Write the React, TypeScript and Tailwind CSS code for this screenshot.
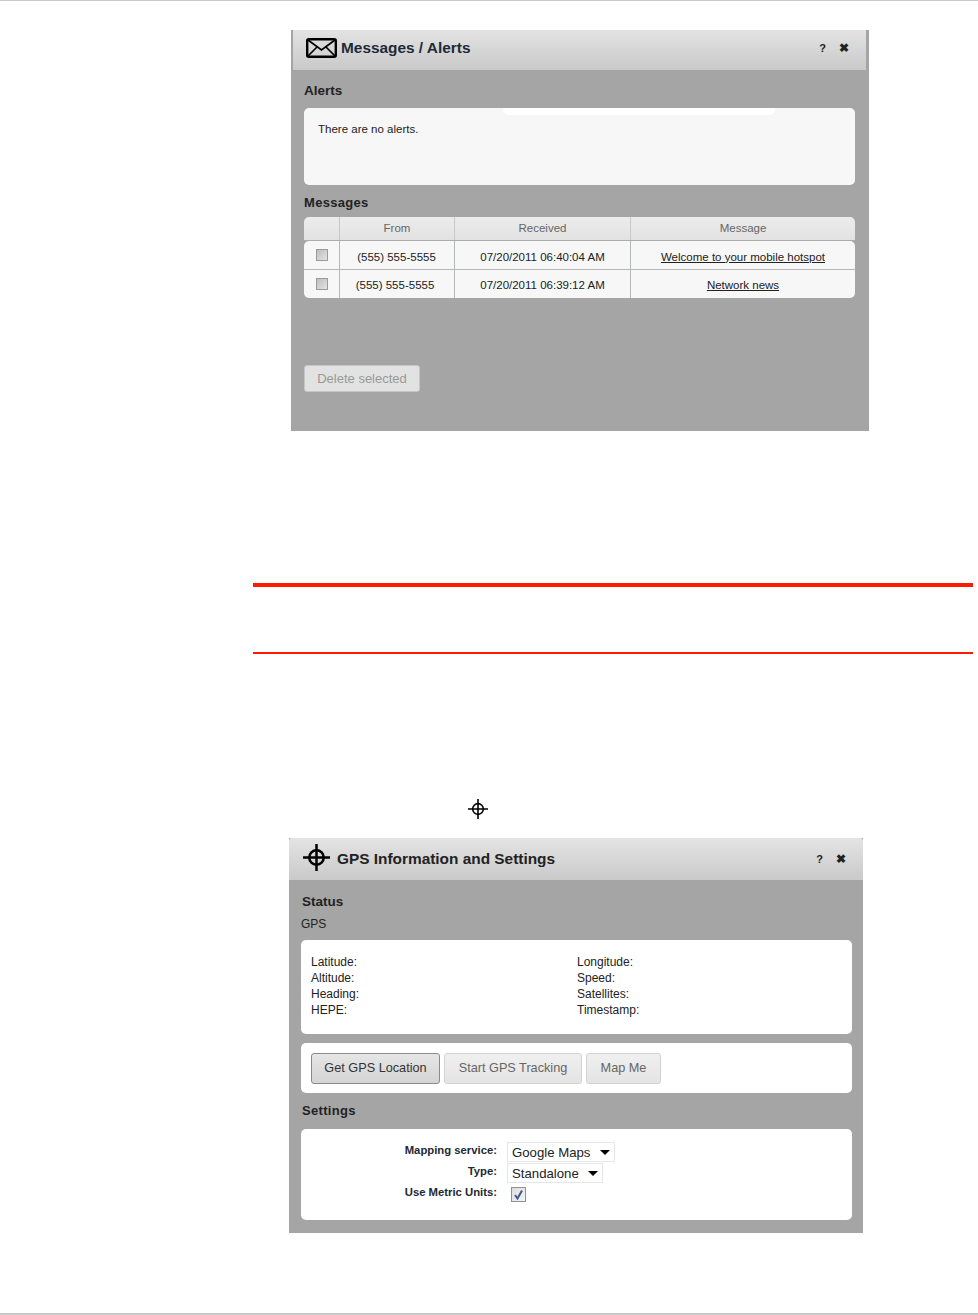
const messages = [
  { from: "(555) 555-5555", received: "07/20/2011 06:40:04 AM", subject: "Welcome to your mobile hotspot", shift: "pr-[1px] pt-[5px]", top: "pt-[5px]", height: "h-[29px]" },
  { from: "(555) 555-5555", received: "07/20/2011 06:39:12 AM", subject: "Network news", shift: "pr-[4px] pt-[3px]", top: "pt-[3px]", height: "h-[28px]" },
];

function EnvelopeIcon() {
  return (
    <svg width="31" height="20" viewBox="0 0 31 20" fill="none" stroke="#000">
      <rect x="1.2" y="1.2" width="28.6" height="17.6" rx="1.5" strokeWidth="2.4" />
      <path d="M2 2 L15.5 12 L29 2 M2 18 L11 9 M29 18 L20 9" strokeWidth="1.7" />
    </svg>
  );
}

function Crosshair({ size, strokeWidth }: { size: number; strokeWidth: number }) {
  return (
    <svg width={size} height={size} viewBox="0 0 28 28" fill="none" stroke="#000" strokeWidth={strokeWidth}>
      <circle cx="14" cy="14" r="7.5" />
      <path d="M14 0 V28 M0 14 H28" />
    </svg>
  );
}

function HeaderActions() {
  return (
    <div className="ml-auto flex items-center gap-[13px] text-[11px] font-bold text-[#222]">
      <span>?</span>
      <span className="text-[12px]">✖</span>
    </div>
  );
}

function Row({ label, className }: { label: string; className?: string }) {
  return <div className={"text-[12px] leading-[16px] text-[#222] " + (className ?? "")}>{label}</div>;
}

function FakeSelect({ label, width }: { label: string; width: string }) {
  return (
    <div className={"flex items-center h-[20px] pl-[4px] pt-[1px] bg-white border border-[#e6e6e6] text-[13.2px] text-[#222] " + width}>
      {label}
      <span className="ml-auto mr-[4px] w-0 h-0 border-x-[5px] border-x-transparent border-t-[5px] border-t-black" />
    </div>
  );
}

function GpsButton({ label, active, width }: { label: string; active?: boolean; width: string }) {
  return (
    <div
      className={
        "h-[31px] pt-[2px] flex items-center justify-center rounded-[3px] border text-[12.7px] bg-gradient-to-b " +
        width +
        (active
          ? " border-[#8b8b8b] from-[#e6e6e6] to-[#d4d4d4] text-[#333]"
          : " border-[#d2d2d2] from-[#f0f0f0] to-[#e4e4e4] text-[#666]")
      }
    >
      {label}
    </div>
  );
}

export default function App() {
  return (
    <div className="relative h-[1315px] w-[978px] flex flex-col overflow-hidden bg-white font-['Liberation_Sans',Arial,sans-serif]">
      <div className="h-[1px] bg-[#c8c8c8]" />

      {/* Messages / Alerts panel */}
      <div className="mt-[29px] ml-[291px] w-[578px] h-[401px] bg-[#a5a5a5]">
        <div className="h-[40px] ml-[2px] mr-[3px] flex items-center pl-[13px] pr-[17px] pb-[4px] bg-gradient-to-b from-[#e3e3e3] to-[#c9c9c9]">
          <EnvelopeIcon />
          <span className="ml-[4px] text-[15.4px] font-bold text-[#1e2a35]">Messages / Alerts</span>
          <HeaderActions />
        </div>

        <div className="pl-[13px] pr-[14px]">
          <h2 className="mt-[13px] text-[13.5px] leading-[16px] font-bold text-[#222]">Alerts</h2>
          <div className="relative mt-[9px] h-[77px] rounded-[5px] bg-[#f7f7f7] pl-[14px] pt-[14px] text-[11.5px] leading-[14px] text-[#222]">
            <div className="absolute top-0 left-[199px] w-[272px] h-[7px] rounded-b-[6px] bg-white" />
            There are no alerts.
          </div>

          <h2 className="mt-[10px] text-[13px] leading-[16px] font-bold text-[#222] tracking-[0.3px]">Messages</h2>

          {/* Table head */}
          <div className="mt-[6px] h-[24px] grid grid-cols-[36px_115px_176px_1fr] rounded-t-[5px] bg-gradient-to-b from-[#ececec] to-[#e2e2e2] border-b border-[#a9adad] text-[11.5px] text-[#666]">
            <div className="border-r border-[#c8c8c8]" />
            <div className="flex items-center justify-center border-r border-[#c8c8c8]">From</div>
            <div className="flex items-center justify-center border-r border-[#c8c8c8]">Received</div>
            <div className="flex items-center justify-center">Message</div>
          </div>

          {/* Table rows */}
          <div className="rounded-[5px] bg-[#f7f7f7] text-[11.5px] text-[#222]">
            {messages.map((m, i) => (
              <div
                key={m.subject}
                className={"grid grid-cols-[36px_115px_176px_1fr] " + m.height + (i === 0 ? " border-b border-[#b4b8b8]" : "")}
              >
                <div className="border-r border-[#b4b8b8] pl-[12px] pt-[8px]">
                  <div className="w-[12px] h-[12px] border border-[#9a9a9a] bg-gradient-to-br from-[#bdbdbd] to-[#e4e4e4]" />
                </div>
                <div className={"flex items-center justify-center border-r border-[#b4b8b8] " + m.shift}>{m.from}</div>
                <div className={"flex items-center justify-center border-r border-[#b4b8b8] " + m.top}>{m.received}</div>
                <div className={"flex items-center justify-center underline " + m.top}>{m.subject}</div>
              </div>
            ))}
          </div>

          <div className="mt-[67px] w-[116px] h-[27px] flex items-center justify-center rounded-[3px] border border-[#c6c6c6] bg-[#e2e2e2] text-[13px] text-[#999]">
            Delete selected
          </div>
        </div>
      </div>

      {/* Red note rules */}
      <div className="mt-[152px] ml-[253px] w-[720px] h-[4px] bg-[#ff1a00]" />
      <div className="mt-[65px] ml-[253px] w-[720px] h-[2px] bg-[#ff1a00]" />

      <div className="mt-[145px] ml-[468px]">
        <Crosshair size={20} strokeWidth={2.2} />
      </div>

      {/* GPS panel */}
      <div className="mt-[19px] ml-[289px] w-[574px] h-[395px] bg-[#a5a5a5]">
        <div className="h-[42px] flex items-center pl-[14px] pr-[17px] rounded-t-[3px] bg-gradient-to-b from-[#e4e4e4] to-[#cacaca]">
          <div className="-mt-[3px]">
            <Crosshair size={27} strokeWidth={2.6} />
          </div>
          <span className="ml-[7px] text-[15.4px] font-bold text-[#222]">GPS Information and Settings</span>
          <HeaderActions />
        </div>

        <div className="pl-[12px] pr-[11px]">
          <h2 className="mt-[14px] ml-[1px] text-[13.5px] leading-[16px] font-bold text-[#222]">Status</h2>
          <div className="mt-[6px] text-[12px] leading-[16px] text-[#222]">GPS</div>

          <div className="mt-[8px] h-[94px] rounded-[5px] bg-white pl-[10px] pt-[14px] grid grid-cols-[266px_1fr] content-start">
            <Row label="Latitude:" />
            <Row label="Longitude:" />
            <Row label="Altitude:" />
            <Row label="Speed:" />
            <Row label="Heading:" />
            <Row label="Satellites:" />
            <Row label="HEPE:" />
            <Row label="Timestamp:" />
          </div>

          <div className="mt-[9px] h-[50px] rounded-[5px] bg-white pl-[10px] flex items-center gap-[4px]">
            <GpsButton label="Get GPS Location" active width="w-[129px]" />
            <GpsButton label="Start GPS Tracking" width="w-[138px]" />
            <GpsButton label="Map Me" width="w-[75px]" />
          </div>

          <h2 className="mt-[10px] ml-[1px] text-[13px] leading-[16px] font-bold text-[#222] tracking-[0.3px]">Settings</h2>

          <div className="mt-[10px] h-[91px] rounded-[5px] bg-white pt-[14px] grid grid-cols-[196px_1fr] gap-x-[10px] content-start">
            <div className="text-right text-[11.3px] font-bold text-[#1e2a35] leading-[14px]">Mapping service:</div>
            <div className="-mt-[1px] h-[20px]">
              <FakeSelect label="Google Maps" width="w-[108px]" />
            </div>
            <div className="text-right text-[11.3px] font-bold text-[#1e2a35] leading-[14px] mt-[2px]">Type:</div>
            <div className="mt-[1px] h-[20px]">
              <FakeSelect label="Standalone" width="w-[96px]" />
            </div>
            <div className="text-right text-[11.3px] font-bold text-[#1e2a35] leading-[14px] mt-[2px]">Use Metric Units:</div>
            <div className="mt-[4px] ml-[4px] w-[15px] h-[15px] flex items-center justify-center border border-[#8f8f9d] bg-gradient-to-br from-[#dcdcdc] to-[#f6f6f6]">
              <svg width="11" height="11" viewBox="0 0 11 11" fill="none" stroke="#3d5a98" strokeWidth="2">
                <path d="M2 6 L4.5 9.5 L9 1.5" />
              </svg>
            </div>
          </div>
        </div>
      </div>

      <div className="mt-auto h-[2px] bg-[#c8c8c8]" />
    </div>
  );
}
